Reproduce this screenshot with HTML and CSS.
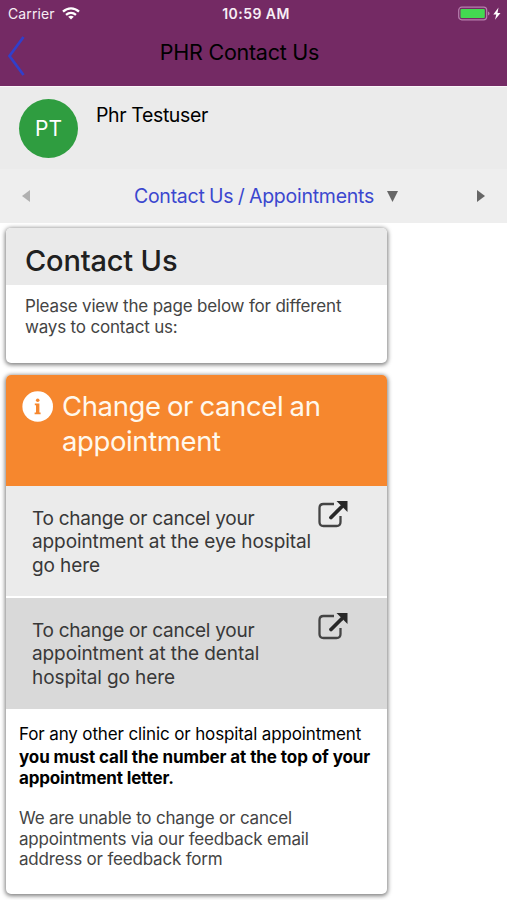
FILE: index.html
```html
<!DOCTYPE html>
<html lang="en">
<head>
<meta charset="utf-8">
<title>PHR Contact Us</title>
<link rel="stylesheet" href="styles.css">
</head>
<body>
<header class="top">
  <div class="status">
    <div class="carrier"><span>Carrier</span>
      <svg class="wifi" width="18" height="13" viewBox="0 0 18 13" fill="none" stroke="#fff"><path d="M1 4.7C5.7.3 12.300.3 17 4.700" stroke-width="2.300"/><path d="M4 7.900C7 5.300 11 5.300 14 7.900" stroke-width="2.200"/><path d="M9 12.500 6.200 9.700Q9 7.800 11.800 9.700Z" fill="#fff" stroke="none"/></svg>
    </div>
    <span class="clock">10:59 AM</span>
    <div class="power">
      <svg width="44" height="16" viewBox="0 0 44 16"><rect x=".7" y="1.200" width="28" height="12.600" rx="3" fill="none" stroke="#b77fae" stroke-width="1.200"/><rect x="2.500" y="3" width="24.300" height="9" rx="1" fill="#43d951"/><path d="M30 5.500v4q1.500-.5 1.500-2T30 5.500" fill="#b77fae"/><path d="M40.500 1.500 35.300 8.400h3L37 13.800 42.500 6.900h-3z" fill="#fff"/></svg>
    </div>
  </div>
  <nav class="bar">
    <svg class="back" width="20" height="42" viewBox="0 0 20 42" fill="none" stroke="#313fcb" stroke-width="2.700"><path d="M16.500 2 2.500 21l14 19"/></svg>
    <h1 class="title">PHR Contact Us</h1>
  </nav>
</header>
<section class="profile">
  <div class="avatar"><span>PT</span></div>
  <div class="name">Phr Testuser</div>
</section>
<nav class="pager">
  <svg class="prev" width="8" height="12" viewBox="0 0 8 12"><path d="M8 0v12L0 6z" fill="#b0b0b0"/></svg>
  <div class="crumb"><span>Contact Us / Appointments</span><svg width="11" height="11" viewBox="0 0 11 11"><path d="M0 0h11L5.500 11z" fill="#666"/></svg></div>
  <svg class="next" width="8" height="12" viewBox="0 0 8 12"><path d="M0 0v12l8-6z" fill="#666"/></svg>
</nav>
<main class="cards">
  <section class="card intro">
    <h2 class="heading"><span>Contact Us</span></h2>
    <p class="lead">Please view the page below for different<br>ways to contact us:</p>
  </section>
  <section class="card">
    <div class="banner">
      <svg width="32" height="32" viewBox="0 0 32 32"><circle cx="15.700" cy="15.500" r="15.300" fill="#fff"/><path d="M12.800 12.500h4.600v9h1.200v1.700h-6v-1.700h1.400v-7.200h-1.200z" fill="#f6872e"/><circle cx="15.700" cy="9.300" r="1.800" fill="#f6872e"/></svg>
      <h3>Change or cancel an<br>appointment</h3>
    </div>
    <a class="row"><span><span class="first">To change or cancel your</span><br>appointment at the eye hospital<br>go here</span>
      <svg class="ext" width="32" height="28" viewBox="0 0 32 28"><path d="M18 4H7.500Q3.500 4 3.500 8v14q0 4 4 4h13q4 0 4-4v-6" fill="none" stroke="#444" stroke-width="2.300"/><path d="m15 17.500 10.500-10.500" stroke="#282828" stroke-width="3.800" stroke-linecap="round"/><path d="M20.500 1H31.500V12z" fill="#282828"/></svg></a>
    <a class="row dark"><span><span class="first">To change or cancel your</span><br>appointment at the dental<br>hospital go here</span>
      <svg class="ext" width="32" height="28" viewBox="0 0 32 28"><path d="M18 4H7.500Q3.500 4 3.500 8v14q0 4 4 4h13q4 0 4-4v-6" fill="none" stroke="#444" stroke-width="2.300"/><path d="m15 17.500 10.500-10.500" stroke="#282828" stroke-width="3.800" stroke-linecap="round"/><path d="M20.500 1H31.500V12z" fill="#282828"/></svg></a>
    <div class="notes">
      <p class="other">For any other clinic or hospital appointment</p>
      <p class="must">you must call the number at the top of your<br><span class="letter">appointment letter.</span></p>
      <p class="unable">We are unable to change or cancel<br>appointments via our feedback email<br>address or feedback form</p>
    </div>
  </section>
</main>
</body>
</html>
```

FILE: styles.css
```css
* { box-sizing: border-box; }
body { margin: 0; height: 900px; overflow: hidden; background: #fff; color: #000; font-family: Inter, "Liberation Sans", sans-serif; white-space: nowrap; }
h1, h2, h3, p { margin: 0; font-weight: 400; }
svg { display: block; flex: none; }

.top { height: 86px; background: #742a64; }
.status { display: grid; grid-template-columns: 1fr auto 1fr; align-items: center; height: 27px; padding: 0 5px 0 8px; color: #f7eef5; font-size: 14px; }
.carrier { display: flex; align-items: center; gap: 7px; letter-spacing: .1px; }
.clock { padding-left: 2px; font-weight: 600; letter-spacing: .45px; }
.power { display: flex; justify-content: flex-end; }
.bar { display: grid; grid-template-columns: 60px 1fr 60px; align-items: center; height: 59px; padding-left: 7px; }
.back { margin-top: -1px; }
.title { margin: -10px 35px 0 0; text-align: center; font-size: 21.5px; line-height: 28px; letter-spacing: -.25px; }

.profile { display: flex; height: 83px; padding: 12px 19px 0; gap: 18px; background: #ebebeb; border-top: 1px solid #faf5f9; }
.avatar { display: flex; align-items: center; justify-content: center; width: 59px; height: 59px; border-radius: 50%; background: #2f9d40; color: #fff; font-size: 21px; }
.name { padding-top: 3px; font-size: 19.5px; line-height: 26px; letter-spacing: -.38px; }

.pager { display: grid; grid-template-columns: 60px 1fr 60px; align-items: center; height: 54px; padding: 0 22px; background: #eee; }
.crumb { display: flex; align-items: center; justify-content: center; gap: 13px; margin-left: 25px; color: #3b47cf; font-size: 19.5px; letter-spacing: -.25px; word-spacing: -.8px; }
.next { justify-self: end; }

.cards { display: flex; flex-direction: column; gap: 12px; width: 388px; padding: 5px 1px 0 6px; }
.card { overflow: hidden; border-radius: 5px; background: #fff; box-shadow: 0 1px 4px 1px rgba(0,0,0,.5); }
.intro { height: 135px; }
.heading { height: 57px; padding: 15px 0 0 19px; background: #eaeaea; color: #202020; font-size: 29px; font-weight: 500; line-height: 36px; letter-spacing: -.18px; }
.lead { padding: 11px 0 0 19px; color: #444; font-size: 17px; line-height: 21px; letter-spacing: -.18px; }

.banner { display: flex; height: 111px; padding: 16px; gap: 8px; background: #f6872e; color: #fff8ec; }
.banner h3 { margin-top: -2px; font-size: 27.5px; line-height: 35px; letter-spacing: -.38px; word-spacing: -1px; }
.row { display: flex; justify-content: space-between; height: 112px; padding: 21px 39px 0 26px; border-bottom: 2px solid #fff; background: #ebebeb; color: #383838; font-size: 19px; line-height: 23.3px; letter-spacing: -.09px; }
.first { letter-spacing: -.25px; }
.row.dark { height: 111px; border-bottom: 0; background: #d9d9d9; }
.ext { margin: -7px 0 0 -30px; }
.notes { height: 185px; padding: 14px 0 0 13px; font-size: 17px; }
.other { line-height: 22px; letter-spacing: -.13px; }
.must { padding-top: 2px; font-weight: 700; font-size: 17px; line-height: 21px; letter-spacing: -.09px; }
.letter { letter-spacing: -.16px; }
.unable { padding-top: 19px; color: #444; line-height: 20.7px; letter-spacing: -.19px; }
```
